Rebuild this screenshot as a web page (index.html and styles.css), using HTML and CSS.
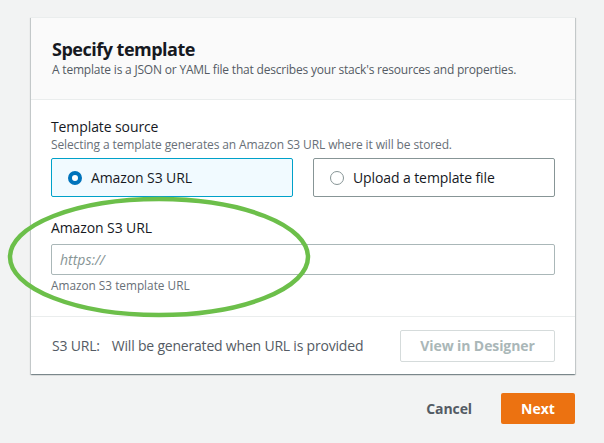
FILE: index.html
```html
<!DOCTYPE html>
<html>
<head>
<meta charset="utf-8">
<link rel="stylesheet" href="styles.css">
</head>
<body>
<div class="page">
  <div class="card">
    <div class="card-header">
      <h2 class="title">Specify template</h2>
      <p class="subtitle">A template is a JSON or YAML file that describes your stack's resources and properties.</p>
    </div>
    <div class="card-body">
      <div class="field-label">Template source</div>
      <div class="field-desc">Selecting a template generates an Amazon S3 URL where it will be stored.</div>
      <div class="tiles">
        <div class="tile tile-selected"><span class="radio radio-on"></span><span>Amazon S3 URL</span></div>
        <div class="tile"><span class="radio"></span><span>Upload a template file</span></div>
      </div>
      <div class="url-field">
        <div class="field-label">Amazon S3 URL</div>
        <div class="input"><span class="placeholder">https://</span></div>
        <div class="hint">Amazon S3 template URL</div>
        <svg class="highlight" width="306" height="124" viewBox="0 0 306 124"><ellipse cx="153" cy="62" rx="149" ry="58" fill="none" stroke="#6cbf4a" stroke-width="4.5"/></svg>
      </div>
    </div>
    <div class="card-footer">
      <div class="s3url"><span class="s3url-key">S3 URL:</span><span>Will be generated when URL is provided</span></div>
      <div class="btn-disabled">View in Designer</div>
    </div>
  </div>
  <div class="actions">
    <span class="cancel">Cancel</span>
    <span class="next">Next</span>
  </div>
</div>
</body>
</html>
```
FILE: styles.css
```css
* { box-sizing: border-box; }
html, body { margin: 0; padding: 0; }
body {
  background: #f2f3f3;
  font-family: "Open Sans", "Noto Sans", sans-serif;
  color: #16191f;
  width: 604px;
  height: 443px;
  overflow: hidden;
}
.page { padding: 17px 29px 0 31px; }
.card {
  width: 544px;
  background: #fff;
  border-top: 1px solid #eaeded;
  box-shadow: 0 1px 1px rgba(0,28,36,.3), 1px 1px 1px rgba(0,28,36,.15), -1px 1px 1px rgba(0,28,36,.15);
}
.card-header {
  background: #fafafa;
  border-bottom: 1px solid #eaeded;
  padding: 19px 20px 0 21px;
  height: 82px;
}
.title {
  margin: 0;
  font-size: 18px;
  line-height: 24px;
  font-weight: 700;
  letter-spacing: -0.5px;
}
.subtitle {
  margin: 1px 0 0;
  font-size: 12px;
  line-height: 16px;
  color: #545b64;
  letter-spacing: -0.2px;
}
.card-body { padding: 17px 20px 0 20px; height: 217px; border-bottom: 1px solid #eaeded; }
.field-label { font-size: 14px; line-height: 19px; letter-spacing: -0.1px; }
.field-desc { font-size: 12px; line-height: 16px; color: #687078; letter-spacing: -0.12px; margin-top: 1px; }
.tiles {
  display: grid;
  grid-template-columns: 1fr 1fr;
  gap: 20px;
  margin-top: 5px;
}
.tile {
  height: 39px;
  border: 1px solid #879596;
  border-radius: 2px;
  display: flex;
  align-items: center;
  gap: 9px;
  padding-left: 16px;
  font-size: 14px;
  letter-spacing: -0.1px;
}
.tile-selected { background: #f1faff; border-color: #00a1c9; padding-left: 16px; }
.radio {
  width: 14px; height: 14px;
  border-radius: 50%;
  border: 1px solid #879596;
  background: #fff;
  flex: none;
}
.radio-on { border: 4px solid #0073bb; }
.url-field { position: relative; margin-top: 21px; }
.input {
  margin-top: 7px;
  height: 31px;
  border: 1px solid #aab7b8;
  border-radius: 2px;
  padding-left: 8px;
  display: flex;
  align-items: center;
  font-size: 14px;
}
.placeholder { color: #879596; font-style: italic; }
.hint { font-size: 11.8px; line-height: 16px; color: #687078; margin-top: 2px; letter-spacing: 0; }
.highlight { position: absolute; left: -45px; top: -23px; pointer-events: none; }
.card-footer {
  height: 57px;
  padding: 0 20px 0 21px;
  display: flex;
  align-items: center;
  justify-content: space-between;
}
.s3url { font-size: 14px; color: #545b64; display: flex; gap: 12px; letter-spacing: -0.2px; }
.btn-disabled {
  width: 155px;
  height: 32px;
  border: 1px solid #d5dbdb;
  border-radius: 2px;
  display: flex; align-items: center; justify-content: center;
  font-size: 14px; font-weight: 700;
  color: #aab7b8;
  letter-spacing: -0.1px;
}
.actions {
  width: 544px;
  display: flex;
  justify-content: flex-end;
  align-items: center;
  gap: 29px;
  margin-top: 19px;
}
.cancel { font-size: 14px; font-weight: 700; color: #545b64; letter-spacing: -0.1px; }
.next {
  width: 74px; height: 31px;
  background: #ec7211;
  color: #fff;
  border-radius: 2px;
  display: flex; align-items: center; justify-content: center;
  font-size: 14px; font-weight: 700;
}
```
